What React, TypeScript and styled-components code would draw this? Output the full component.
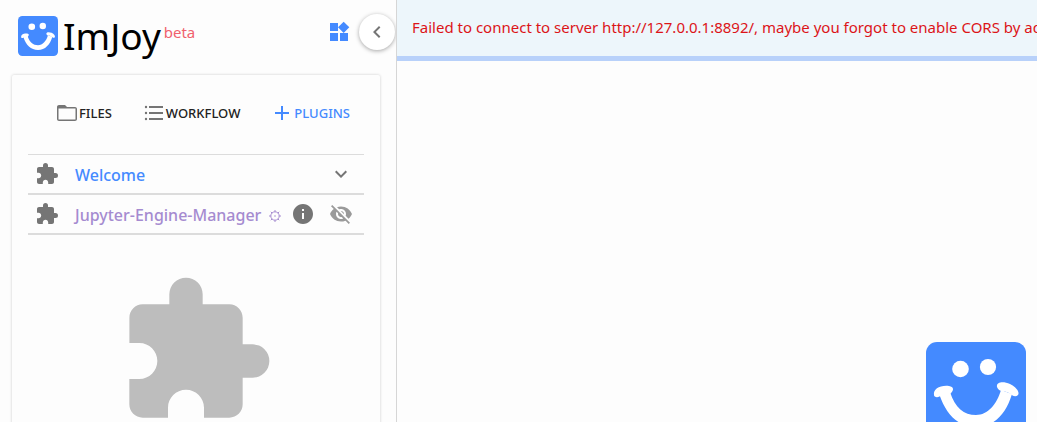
import React from "react";
import styled, { createGlobalStyle } from "styled-components";

const GlobalStyle = createGlobalStyle`
  *, *::before, *::after { box-sizing: border-box; }
  body {
    margin: 0;
    background: #fdfdfd;
    color: #222;
    font-family: "Noto Sans", "Open Sans", sans-serif;
  }
  button { font-family: inherit; }
`;

const Shell = styled.div`
  position: relative;
  display: flex;
  height: 100vh;
  overflow: hidden;
`;

const Sidebar = styled.aside`
  flex: 0 0 397px;
  border-right: 1px solid #d6d6d6;
  overflow: hidden;
`;

const Header = styled.header`
  display: flex;
  align-items: center;
  height: 75px;
  padding: 0 1px 12px 18px;
`;

const Brand = styled.a`
  display: flex;
  align-items: center;
  margin-right: auto;
  padding-top: 8px;
  color: #000;
  text-decoration: none;
`;

const BrandName = styled.span`
  margin-left: 5px;
  font-size: 37px;
  line-height: 46px;
`;

const Beta = styled.sup`
  align-self: flex-start;
  margin-left: 3px;
  color: #f0616d;
  font-size: 15px;
  line-height: 38px;
`;

const IconButton = styled.button<{ $size: number }>`
  display: inline-flex;
  flex: none;
  align-items: center;
  justify-content: center;
  width: ${(p) => p.$size}px;
  height: ${(p) => p.$size}px;
  padding: 0;
  border: 0;
  border-radius: 50%;
  background: none;
  cursor: pointer;
`;

const CollapseButton = styled(IconButton)`
  margin-left: 8px;
  background: #fff;
  box-shadow: 0 1px 4px rgba(0, 0, 0, 0.35);
`;

const Panel = styled.section`
  min-height: 100%;
  margin: 0 16px 0 12px;
  padding: 16px;
  border-radius: 2px;
  box-shadow: 0 0 3px rgba(0, 0, 0, 0.2);
`;

const Tabs = styled.nav`
  display: flex;
  justify-content: space-between;
  height: 63px;
  padding: 12px 14px 0 27px;
`;

const Tab = styled.button<{ $active?: boolean }>`
  display: inline-flex;
  align-items: center;
  height: 20px;
  padding: 0;
  border: 0;
  background: none;
  color: ${(p) => (p.$active ? "#448aff" : "#222")};
  font-size: 13px;
  font-weight: 500;
  line-height: 20px;
  cursor: pointer;
`;

const PluginList = styled.ul`
  margin: 0;
  padding: 0;
  border-top: 1px solid #dcdcdc;
  list-style: none;
`;

const PluginRow = styled.li`
  display: flex;
  align-items: center;
  height: 40px;
  padding: 0 11px 0 7px;
  border-bottom: 2px solid #dcdcdc;
`;

const PluginName = styled.button<{ $color: string }>`
  margin: 0 auto 0 16px;
  padding: 2px 0 0;
  border: 0;
  background: none;
  color: ${(p) => p.$color};
  font-size: 16px;
  font-weight: 500;
  line-height: 24px;
  white-space: nowrap;
  cursor: pointer;
`;

const RowActions = styled.div`
  display: flex;
  gap: 14px;
`;

const Empty = styled.div`
  display: flex;
  justify-content: center;
  padding-top: 36px;
`;

const Main = styled.main`
  flex: 1;
  min-width: 0;
`;

const Banner = styled.div`
  height: 61px;
  padding: 0 15px;
  overflow: hidden;
  border-bottom: 5px solid #b8d1fa;
  background: #edf6fb;
  color: #dc1418;
  font-size: 15px;
  line-height: 54px;
  white-space: nowrap;
`;

const FloatingLogo = styled.button`
  position: absolute;
  right: 11px;
  bottom: -20px;
  padding: 0;
  border: 0;
  background: none;
  line-height: 0;
  cursor: pointer;
`;

const paths = {
  extension:
    "M20.5 11H19V7c0-1.1-.9-2-2-2h-4V3.5a2.5 2.5 0 0 0-5 0V5H4c-1.1 0-1.99.9-1.99 2v3.8H3.5c1.49 0 2.7 1.21 2.7 2.7s-1.21 2.7-2.7 2.7H2V20c0 1.1.9 2 2 2h3.8v-1.5c0-1.49 1.21-2.7 2.7-2.7 1.49 0 2.7 1.21 2.7 2.7V22H17c1.1 0 2-.9 2-2v-4h1.5a2.5 2.5 0 0 0 0-5z",
  widgets:
    "M13 13v8h8v-8h-8zM3 21h8v-8H3v8zM3 3v8h8V3H3zm13.66-1.31L11 7.34 16.66 13l5.66-5.66-5.66-5.65z",
  left: "M15.41 7.41L14 6l-6 6 6 6 1.41-1.41L10.83 12z",
  down: "M7.41 8.59L12 13.17l4.59-4.58L18 10l-6 6-6-6z",
  folder:
    "M20 6h-8l-2-2H4c-1.1 0-1.99.9-1.99 2L2 18c0 1.1.9 2 2 2h16c1.1 0 2-.9 2-2V8c0-1.1-.9-2-2-2zm.5 12.5h-17v-11h17v11z",
  list: "M4 10.8a1.2 1.2 0 1 0 0 2.4 1.2 1.2 0 0 0 0-2.4zm0-6a1.2 1.2 0 1 0 0 2.4 1.2 1.2 0 0 0 0-2.4zm0 12a1.2 1.2 0 1 0 0 2.4 1.2 1.2 0 0 0 0-2.4zM7 19h14v-2H7v2zm0-6h14v-2H7v2zm0-8v2h14V5H7z",
  add: "M19 13h-6v6h-2v-6H5v-2h6V5h2v6h6v2z",
  info: "M12 2C6.48 2 2 6.48 2 12s4.48 10 10 10 10-4.48 10-10S17.52 2 12 2zm1 15h-2v-6h2v6zm0-8h-2V7h2v2z",
  hidden:
    "M12 7c2.76 0 5 2.24 5 5 0 .65-.13 1.26-.36 1.83l2.92 2.92c1.51-1.26 2.7-2.89 3.43-4.75-1.73-4.39-6-7.5-11-7.5-1.4 0-2.74.25-3.98.7l2.16 2.16C10.74 7.13 11.35 7 12 7zM2 4.27l2.28 2.28.46.46C3.08 8.3 1.78 10.02 1 12c1.73 4.39 6 7.5 11 7.5 1.55 0 3.03-.3 4.38-.84l.42.42L19.73 22 21 20.73 3.27 3 2 4.27zM7.53 9.8l1.55 1.55c-.05.21-.08.43-.08.65 0 1.66 1.34 3 3 3 .22 0 .44-.03.65-.08l1.55 1.55c-.67.33-1.41.53-2.2.53-2.76 0-5-2.24-5-5 0-.79.2-1.53.53-2.2zm4.31-.78l3.15 3.15.02-.16c0-1.66-1.34-3-3-3l-.17.01z",
};

type IconProps = { name: keyof typeof paths; size?: number; color?: string };

const Icon = ({ name, size = 24, color = "#757575" }: IconProps) => (
  <svg width={size} height={size} viewBox="0 0 24 24" fill={color} aria-hidden="true">
    <path d={paths[name]} />
  </svg>
);

const Gear = styled.svg`
  margin-left: 8px;
  vertical-align: -1px;
`;

const EngineGear = () => (
  <Gear width="12" height="12" viewBox="0 0 12 12" fill="none" stroke="currentColor" aria-hidden="true">
    <circle cx="6" cy="6" r="4.2" />
    <circle cx="6" cy="6" r=".8" fill="currentColor" stroke="none" />
    <path d="M6 0v1.8M6 10.2V12M0 6h1.8M10.2 6H12M1.8 1.8l1.2 1.2M9 9l1.2 1.2M1.8 10.2L3 9M9 3l1.2-1.2" />
  </Gear>
);

const Smile = ({ size }: { size: number }) => (
  <svg width={size} height={size} viewBox="0 0 100 100" aria-hidden="true">
    <rect width="100" height="100" rx="11" fill="#448aff" />
    <g fill="#fff">
      <circle cx="34.5" cy="27" r="8.3" />
      <circle cx="62" cy="25" r="8.1" />
      <path d="M13.5 53C20 72 32 85 50 85C68 85 80 72 86 52L75 48C71 62 62 73 50 73C38 73 29 66 24 50Z" />
      <path d="M8 53C7 47 14 43 23 44C28 45 28 48 25 51C22 55 17 51 13.5 54.5C11 56 8 55 8 53Z" />
      <path d="M71 45C70 40 77 39 84 42C90 45 94 50 92 53C89 56 86 53 83 51C79 48 73 51 71 45Z" />
    </g>
  </svg>
);

export default function App() {
  return (
    <>
      <GlobalStyle />
      <Shell>
        <Sidebar>
          <Header>
            <Brand href="#">
              <Smile size={40} />
              <BrandName>ImJoy</BrandName>
              <Beta>beta</Beta>
            </Brand>
            <IconButton $size={24} aria-label="Workspaces">
              <Icon name="widgets" color="#448aff" />
            </IconButton>
            <CollapseButton $size={36} aria-label="Collapse sidebar">
              <Icon name="left" />
            </CollapseButton>
          </Header>
          <Panel>
            <Tabs>
              <Tab>
                <Icon name="folder" />
                FILES
              </Tab>
              <Tab>
                <Icon name="list" />
                WORKFLOW
              </Tab>
              <Tab $active>
                <Icon name="add" color="#448aff" />
                PLUGINS
              </Tab>
            </Tabs>
            <PluginList>
              <PluginRow>
                <Icon name="extension" />
                <PluginName $color="#448aff">Welcome</PluginName>
                <IconButton $size={24} aria-label="Expand Welcome">
                  <Icon name="down" />
                </IconButton>
              </PluginRow>
              <PluginRow>
                <Icon name="extension" />
                <PluginName $color="#a58bd0">
                  Jupyter-Engine-Manager
                  <EngineGear />
                </PluginName>
                <RowActions>
                  <IconButton $size={24} aria-label="Plugin information">
                    <Icon name="info" />
                  </IconButton>
                  <IconButton $size={24} aria-label="Show plugin">
                    <Icon name="hidden" color="#9a9a9a" />
                  </IconButton>
                </RowActions>
              </PluginRow>
            </PluginList>
            <Empty>
              <Icon name="extension" size={160} color="#bdbdbd" />
            </Empty>
          </Panel>
        </Sidebar>
        <Main>
          <Banner role="alert">
            Failed to connect to server http://127.0.0.1:8892/, maybe you forgot to enable CORS by adding
          </Banner>
        </Main>
        <FloatingLogo aria-label="ImJoy menu">
          <Smile size={100} />
        </FloatingLogo>
      </Shell>
    </>
  );
}
